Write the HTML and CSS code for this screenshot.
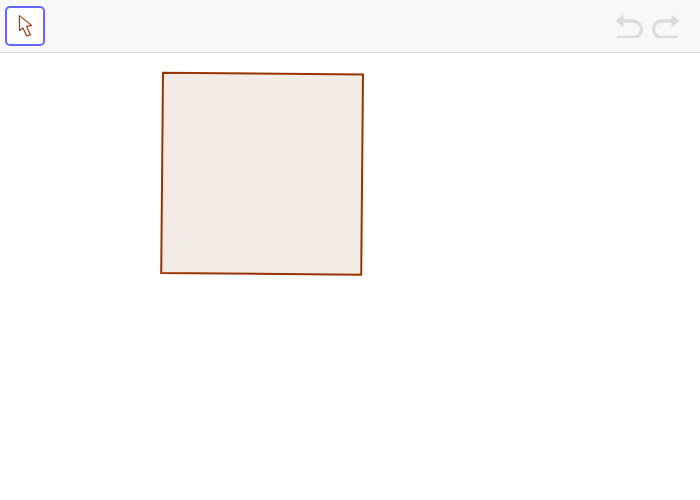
FILE: index.html
```html
<!DOCTYPE html>
<html lang="en">
<head>
<meta charset="utf-8">
<title>Geometry canvas</title>
<link rel="stylesheet" href="styles.css">
</head>
<body>
<header class="toolbar">
  <button class="tool" type="button" aria-label="Move">
    <svg class="arrow" width="16" height="22" viewBox="0 0 16 22">
      <path d="M2.3 0.6 L2.6 15.6 L5.9 13 L9.7 21 L13.3 19.6 L9.6 11.4 L14.6 10.4 Z" fill="#fff" stroke="#a03c0c" stroke-width="1.2" stroke-linejoin="round"/>
    </svg>
  </button>
  <div class="history">
    <svg width="30" height="24" viewBox="0 0 30 24">
      <path d="M0.5 7 L8.5 0.5 L8.5 13.5 Z" fill="#dcdcdc"/>
      <path d="M7 7 H18.25 A8.25 8.25 0 0 1 18.25 23.5 H2" fill="none" stroke="#dcdcdc" stroke-width="3.4"/>
    </svg>
    <svg width="30" height="24" viewBox="0 0 30 24">
      <path d="M29.5 7 L21.5 0.5 L21.5 13.5 Z" fill="#dcdcdc"/>
      <path d="M23 7 H11.75 A8.25 8.25 0 0 0 11.75 23.5 H28" fill="none" stroke="#dcdcdc" stroke-width="3.4"/>
    </svg>
  </div>
</header>
<main class="canvas">
  <svg class="figure" width="700" height="447" viewBox="0 53 700 447">
    <polygon points="163,72.7 363,74.5 361.2,274.7 161.2,272.9" fill="#873705" fill-opacity="0.1" stroke="#993300" stroke-width="2"/>
  </svg>
</main>
</body>
</html>
```
FILE: styles.css
```css
html, body {
  margin: 0;
  padding: 0;
  background: #fff;
  font-family: "Liberation Sans", sans-serif;
}
body {
  width: 700px;
  height: 500px;
  overflow: hidden;
}
.toolbar {
  box-sizing: border-box;
  height: 53px;
  display: flex;
  justify-content: space-between;
  align-items: flex-start;
  padding: 6px 20px 0 5px;
  background: #f8f8f8;
  border-bottom: 1px solid #dcdcdc;
}
.tool {
  box-sizing: border-box;
  width: 40px;
  height: 40px;
  padding: 0;
  display: flex;
  align-items: center;
  justify-content: center;
  background: #fff;
  border: 2px solid #6666ff;
  border-radius: 5px;
}
.history {
  display: flex;
  gap: 5px;
  margin-top: 8px;
}
.history svg, .figure {
  display: block;
}
```
